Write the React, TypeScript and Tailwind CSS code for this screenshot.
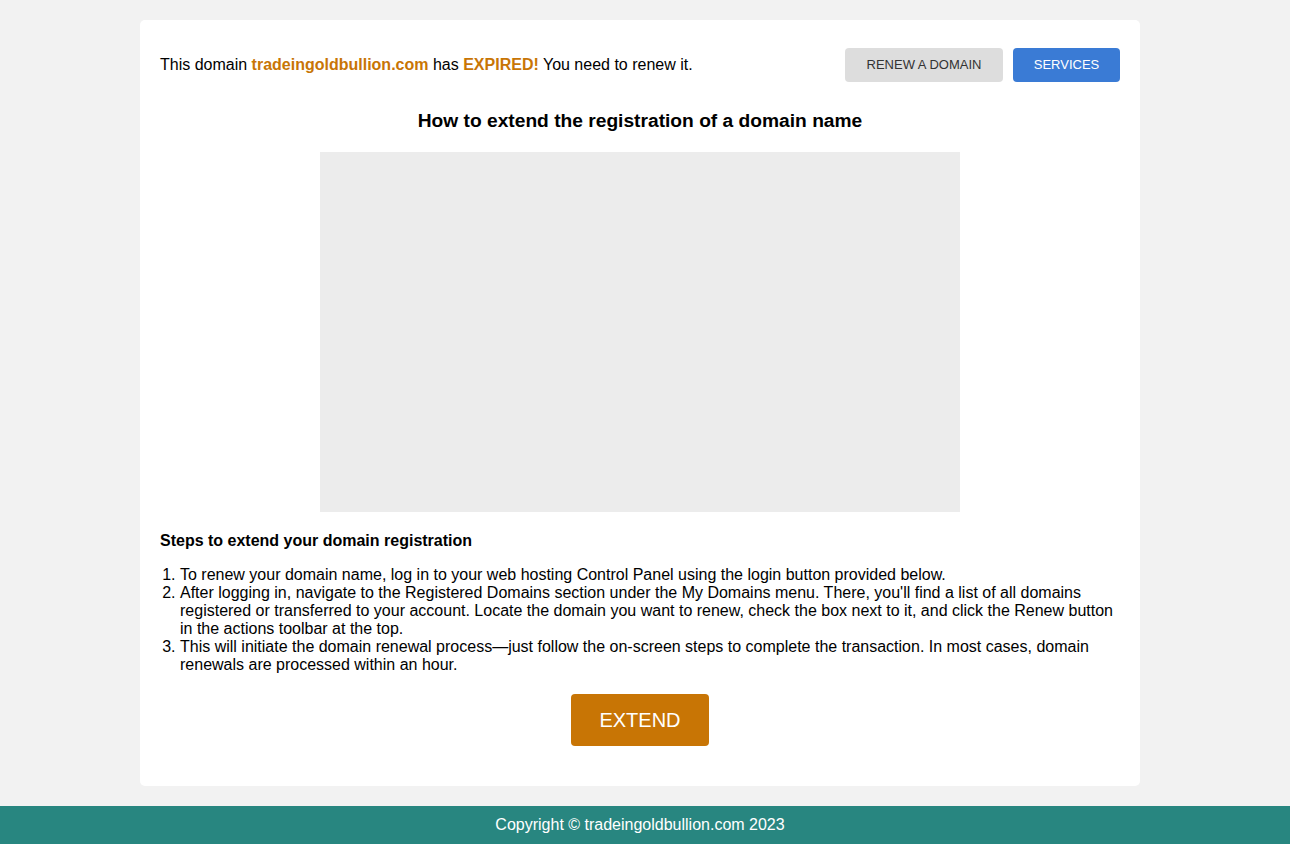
export default function App() {
  return (
    <div className="min-h-screen flex flex-col bg-[#f2f2f2] font-['Liberation_Sans',Arial,sans-serif] text-black">
      <main className="flex-1 pt-5 pb-5">
        <div className="w-[1000px] ml-[140px] bg-white rounded-[5px] px-5 pt-7 pb-10">
          <div className="flex items-center justify-between">
            <p className="text-base">
              This domain <span className="font-bold text-[#c87505]">tradeingoldbullion.com</span> has{" "}
              <span className="font-bold text-[#c87505]">EXPIRED!</span> You need to renew it.
            </p>
            <div className="flex gap-[10px]">
              <button className="h-[34px] w-[158px] rounded-[4px] bg-[#dddddd] text-[13px] text-[#333]">
                RENEW A DOMAIN
              </button>
              <button className="h-[34px] w-[107px] rounded-[4px] bg-[#3a7bd5] text-[13px] text-white">
                SERVICES
              </button>
            </div>
          </div>

          <h2 className="mt-[27px] text-center text-[19.2px] font-bold leading-[23px]">
            How to extend the registration of a domain name
          </h2>

          <div className="mx-auto mt-5 w-[640px] h-[360px] bg-[#ececec]" />

          <h3 className="mt-5 text-base font-bold leading-[18px]">Steps to extend your domain registration</h3>

          <ol className="mt-4 list-decimal pl-5 text-base leading-[18px]">
            <li>To renew your domain name, log in to your web hosting Control Panel using the login button provided below.</li>
            <li>
              After logging in, navigate to the Registered Domains section under the My Domains menu. There, you'll find a
              list of all domains registered or transferred to your account. Locate the domain you want to renew, check the
              box next to it, and click the Renew button in the actions toolbar at the top.
            </li>
            <li>
              This will initiate the domain renewal process—just follow the on-screen steps to complete the transaction. In
              most cases, domain renewals are processed within an hour.
            </li>
          </ol>

          <div className="mt-5 flex justify-center">
            <button className="h-[52px] w-[138px] rounded-[4px] bg-[#c87505] text-xl text-white">EXTEND</button>
          </div>
        </div>
      </main>
      <footer className="h-[38px] flex items-center justify-center pr-[10px] bg-[#288680] text-base text-white">
        Copyright © tradeingoldbullion.com 2023
      </footer>
    </div>
  );
}
